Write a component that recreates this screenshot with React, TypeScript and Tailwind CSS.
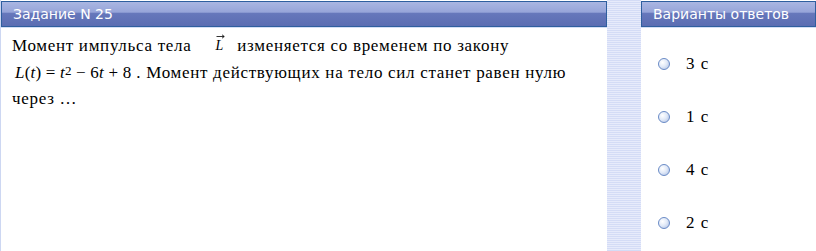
import React from "react";

const serif = { fontFamily: '"Liberation Serif", "Times New Roman", serif' };

function Header({ children }: { children: React.ReactNode }) {
  return (
    <div
      className="h-[26px] mt-[1px] border border-[#2f5f9f] flex items-center pl-[11px] text-white text-[14px] bg-[linear-gradient(to_bottom,#aab6e2_0%,#97a5d9_42%,#6677bb_48%,#5b6db2_100%)]"
      style={{ fontFamily: '"DejaVu Sans", Verdana, sans-serif' }}
    >
      {children}
    </div>
  );
}

function Radio() {
  return (
    <div className="w-[12px] h-[12px] rounded-full border border-[#6a8bc6] bg-[radial-gradient(circle_at_35%_35%,#ffffff_0%,#e2eaf8_45%,#a8bce2_100%)]" />
  );
}

export default function App() {
  const options = ["3 с", "1 с", "4 с", "2 с"];
  return (
    <div className="w-[816px] h-[251px] bg-white flex overflow-hidden">
      <div className="w-[1px] h-full bg-[#cdd7f2]" />
      <div className="w-[606px] h-full flex flex-col">
        <Header>Задание N 25</Header>
        <div className="h-[1px] bg-[#d3ddf4]" />
        <div className="pl-[11px] pt-[5px] text-[17px] tracking-[0.7px] text-black" style={serif}>
          <div className="h-[26px] flex items-center whitespace-pre">
            <span>Момент импульса тела</span>
            <span className="relative inline-block ml-[24px] mr-[14px] italic text-[14px] leading-none tracking-normal">
              L
              <svg
                className="absolute left-[1px] top-[-5px]"
                width="9"
                height="5"
                viewBox="0 0 9 5"
              >
                <path d="M0.5 2.5 H8" stroke="#000" strokeWidth="0.8" />
                <path d="M6 0.8 L8.3 2.5 L6 4.2" fill="none" stroke="#000" strokeWidth="0.8" />
              </svg>
            </span>
            <span>изменяется со временем по закону</span>
          </div>
          <div className="h-[28px] flex items-center whitespace-pre">
            <span className="ml-[3px] text-[17px] tracking-[0.2px]">
              <i>L</i>(<i>t</i>) = <i>t</i>
              <sup className="text-[13px] relative top-[-3px]">2</sup> − 6<i>t</i> + 8
            </span>
            <span> . Момент действующих на тело сил станет равен нулю</span>
          </div>
          <div className="h-[24px] flex items-center">через …</div>
        </div>
      </div>
      <div className="w-[34px] h-full bg-[repeating-linear-gradient(to_bottom,#d4dcf6_0px,#d4dcf6_1px,#e7ebfb_1px,#e7ebfb_2px)]" />
      <div className="flex-1 h-full flex flex-col">
        <Header>Варианты ответов</Header>
        <div className="h-[1px] bg-[#d3ddf4]" />
        <div className="flex flex-col pt-[9px]">
          {options.map((o) => (
            <div key={o} className="h-[53px] flex items-center pl-[17px]">
              <Radio />
              <span className="ml-[16px] text-[17px] tracking-[1px] text-black" style={serif}>
                {o}
              </span>
            </div>
          ))}
        </div>
      </div>
    </div>
  );
}
